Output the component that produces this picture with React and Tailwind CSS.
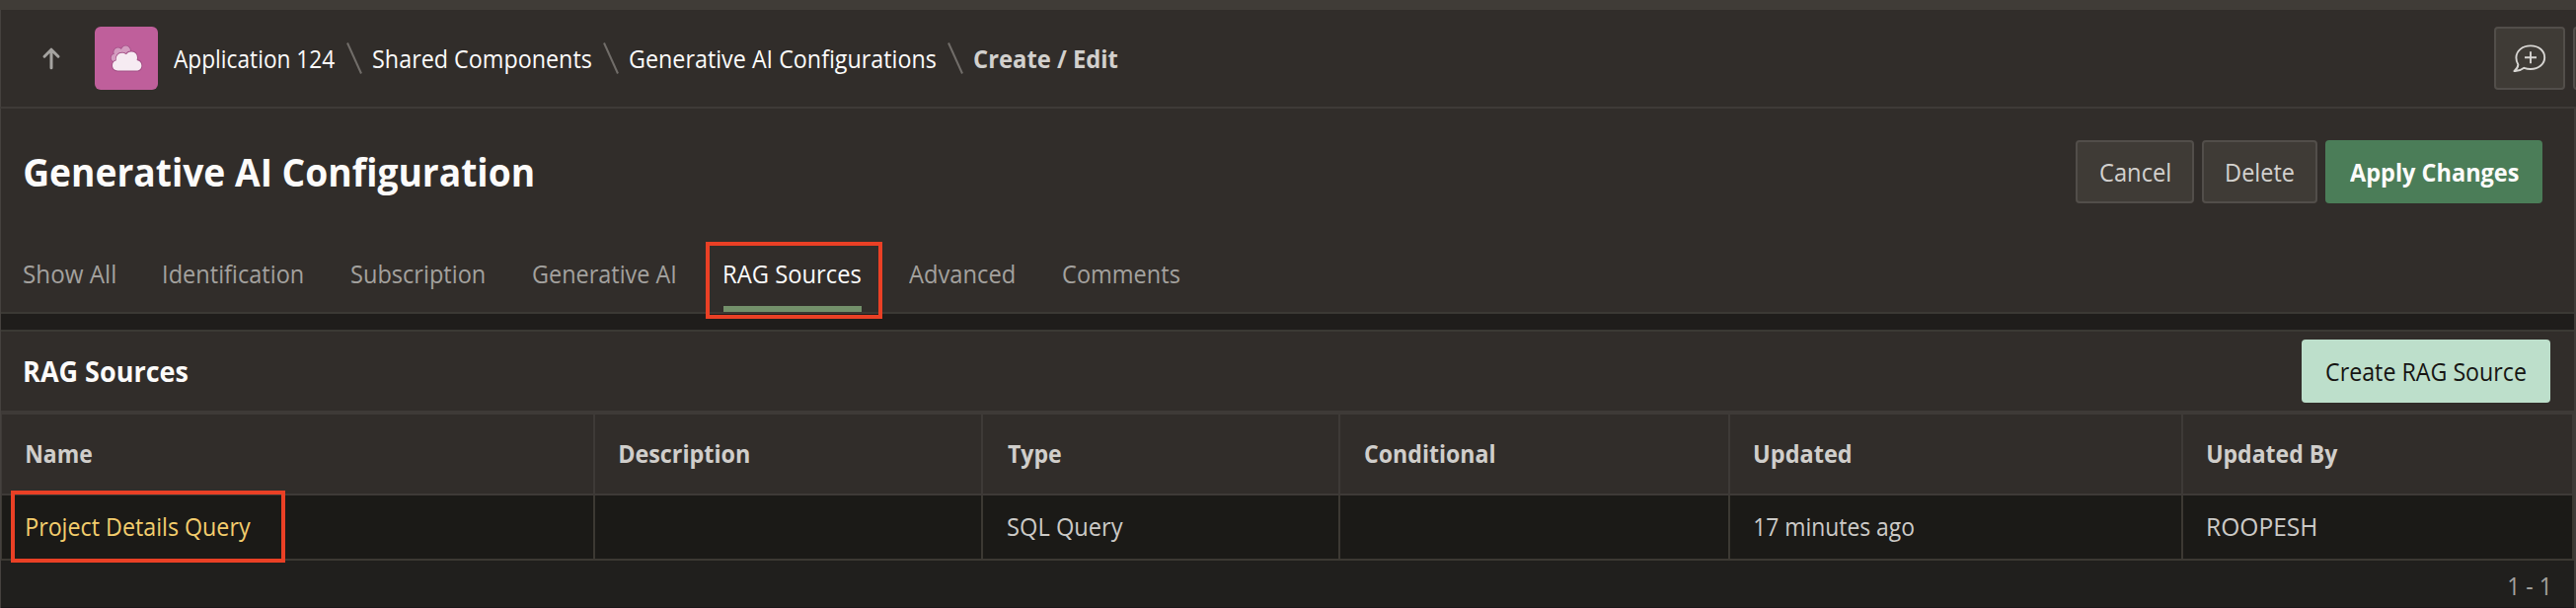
import { useLayoutEffect, useRef, useState } from "react";

/* Text set to an exact visible width: the glyphs are condensed horizontally to fit. */
function Fit({ w, className = "", children }) {
  const ref = useRef(null);
  const [fit, setFit] = useState({ scale: 1, shift: 0 });
  useLayoutEffect(() => {
    const cs = getComputedStyle(ref.current);
    const ctx = document.createElement("canvas").getContext("2d");
    ctx.font = `${cs.fontWeight} ${cs.fontSize} ${cs.fontFamily}`;
    const m = ctx.measureText(children);
    const scale = w / (m.actualBoundingBoxLeft + m.actualBoundingBoxRight);
    setFit({ scale, shift: m.actualBoundingBoxLeft * scale });
  }, [w, children]);
  return (
    <span className={`flex shrink-0 ${className}`} style={{ width: w }}>
      <span
        ref={ref}
        className="origin-left whitespace-nowrap"
        style={{ transform: `translateX(${fit.shift}px) scaleX(${fit.scale})` }}
      >
        {children}
      </span>
    </span>
  );
}

function CloudIcon() {
  const back = (
    <>
      <circle cx="20.6" cy="31.6" r="3.9" />
      <circle cx="23.6" cy="25.8" r="4.3" />
      <circle cx="31.4" cy="24.2" r="4.6" />
      <rect x="22" y="24" width="13" height="10" />
    </>
  );
  const front = (
    <path d="M23.300 44.500C20 44.500 18 42.300 18 39.300C18 36.700 19.300 35 21.800 34.300C21.300 30.500 23.200 27 27.200 26.700C29.200 26.500 30.800 27.200 32 28.200C32.800 26.300 35 25.200 37.600 25.400C41 25.700 42.900 28 43 31.200C43 32.300 42.800 33.200 42.600 34C45.500 34.500 47.400 36.500 47.400 39.400C47.400 42.500 45.200 44.500 42 44.500Z" />
  );
  return (
    <svg viewBox="0 0 64 64" className="size-16">
      <g fill="#a24e85" stroke="#a24e85" strokeWidth="1.6">{back}</g>
      <g fill="#d49cc0">{back}</g>
      <g fill="#a24e85" stroke="#a24e85" strokeWidth="1.8">{front}</g>
      <g fill="#f6ebf2">{front}</g>
    </svg>
  );
}

function Separator() {
  return (
    <svg viewBox="0 0 16 34" className="h-[34px] w-4 shrink-0" fill="none" stroke="#716d69" strokeWidth="2">
      <path d="M1 1.5 15 32.5" />
    </svg>
  );
}

const plainButton =
  "flex h-16 items-center justify-center rounded border-2 border-[#524e4a] bg-[#3f3b36] text-[#d3d1ce]";

const tabs = [
  { label: "Show All", w: 93 },
  { label: "Identification", w: 141 },
  { label: "Subscription", w: 135 },
  { label: "Generative AI", w: 144 },
  { label: "RAG Sources", w: 138, active: true },
  { label: "Advanced", w: 107 },
  { label: "Comments", w: 118 },
];

const columns = [
  { title: "Name", w: 66, value: "Project Details Query", vw: 227, link: true },
  { title: "Description", w: 131 },
  { title: "Type", w: 54, value: "SQL Query", vw: 117 },
  { title: "Conditional", w: 131 },
  { title: "Updated", w: 97, value: "17 minutes ago", vw: 161 },
  { title: "Updated By", w: 132, value: "ROOPESH", vw: 109 },
];

export default function App() {
  return (
    <div className="flex h-[616px] w-[2610px] flex-col overflow-hidden bg-[#312d2a] font-['Open_Sans','Noto_Sans',sans-serif] text-[25px] leading-8 font-[450] text-[#fcfbfa]">
      <div className="h-2.5 shrink-0 bg-[#403c37]" />

      <header className="flex h-[100px] shrink-0 items-center overflow-hidden border-b-2 border-l border-b-[#3e3a37] border-l-[#45413e]">
        <svg viewBox="0 0 20 24" className="ml-[41px] h-6 w-5 shrink-0" fill="none" stroke="#a5a3a0" strokeWidth="3" strokeLinecap="round" strokeLinejoin="round">
          <path d="M10 21.8V4M3 10.2 10 3.2l7 7" />
        </svg>
        <div className="ml-[34px] flex size-16 shrink-0 items-center justify-center rounded-md bg-[#bf5f9b]">
          <CloudIcon />
        </div>
        <nav className="ml-4 flex items-center font-medium">
          <Fit w={163}>Application 124</Fit>
          <span className="ml-3 flex"><Separator /></span>
          <Fit w={221} className="ml-[11px]">Shared Components</Fit>
          <span className="ml-3 flex"><Separator /></span>
          <Fit w={310} className="ml-[11px]">Generative AI Configurations</Fit>
          <span className="ml-3 flex"><Separator /></span>
          <Fit w={146} className="ml-[11px] font-bold text-[#d2d0cd]">Create / Edit</Fit>
        </nav>
        <div className="ml-auto -mr-16 flex gap-2">
          <div className={`${plainButton} w-[72px]`}>
            <svg viewBox="0 0 36 32" className="h-8 w-9 translate-x-px" fill="none" stroke="#d8d6d3" strokeWidth="1.9">
              <path d="M5.4 22.4C4 20.2 3.400 17.800 3.400 15.500 3.400 8.600 9.600 3.400 18 3.400S32.200 8.600 32.200 15.200 26.400 27 18 27c-2.300 0-4.500-.4-6.600-1.200C8.800 27.800 5.300 29.300 1.400 29 3.800 27.300 5.200 25 5.400 22.400Z" strokeLinejoin="round" />
              <path d="M18 9.200v12M12 15.200h12" />
            </svg>
          </div>
          <div className={`${plainButton} w-[67px]`} />
        </div>
      </header>

      <main className="flex grow flex-col border-r-2 border-l border-r-[#403c39] border-l-[#45413e]">
        <section className="flex h-52 shrink-0 flex-col border-b-2 border-[#3b3934]">
          <div className="flex h-32 items-center pr-8 pl-6">
            <h1 className="text-[40px] leading-[50px] font-bold">
              <Fit w={515}>Generative AI Configuration</Fit>
            </h1>
            <div className="ml-auto flex gap-2">
              <button className={`${plainButton} w-[120px]`}><Fit w={71}>Cancel</Fit></button>
              <button className={`${plainButton} w-[117px]`}><Fit w={68}>Delete</Fit></button>
              <button className="flex h-16 w-[220px] items-center justify-center rounded bg-[#4b7d58] font-bold text-[#fcfbfa]">
                <Fit w={171}>Apply Changes</Fit>
              </button>
            </div>
          </div>
          <div className="flex grow pl-[23px] text-[#a3a19e]">
            {tabs.map((t) =>
              t.active ? (
                <div key={t.label} className="relative mr-12 flex w-[140px] justify-center border-b-[6px] border-[#73906a] pt-[23px] text-[#fcfbfa]">
                  <Fit w={t.w} className="font-medium">{t.label}</Fit>
                  <div className="absolute top-[7px] -left-[18px] z-10 h-[78px] w-[179px] border-4 border-[#ea4025]" />
                </div>
              ) : (
                <div key={t.label} className="mr-[49px] flex pt-[23px]"><Fit w={t.w}>{t.label}</Fit></div>
              )
            )}
          </div>
        </section>

        <div className="h-4 shrink-0 bg-[#1f1d1b]" />

        <section className="flex grow flex-col border-t-2 border-[#3b3934]">
          <div className="flex h-20 shrink-0 items-center px-6">
            <h2 className="text-[28px] font-bold"><Fit w={165}>RAG Sources</Fit></h2>
            <button className="ml-auto flex h-16 w-[252px] items-center justify-center rounded bg-[#bddfcb] text-[#161513]">
              <Fit w={202}>Create RAG Source</Fit>
            </button>
          </div>
          <div className="relative grid shrink-0 grid-cols-[602px_393px_362px_395px_459px_396px] border-t-4 border-[#3e3a37]">
            {columns.map((c) => (
              <div key={c.title} className="flex h-[82px] items-center border-r-2 border-b-2 border-[#3e3a37] pb-0.5 pl-[25px] font-bold text-[#d0cecb] first:border-l">
                <Fit w={c.w}>{c.title}</Fit>
              </div>
            ))}
            {columns.map((c) => (
              <div
                key={c.title}
                className={`flex h-[66px] items-center border-r-2 border-b-2 border-[#3c3933] bg-[#1b1a17] pb-0.5 pl-[25px] ${c.link ? "border-l text-[#f3cd6d]" : "text-[#cccac7]"}`}
              >
                {c.value && <Fit w={c.vw}>{c.value}</Fit>}
              </div>
            ))}
            <div className="absolute top-[77px] left-[10px] h-[73px] w-[278px] border-4 border-[#ea4025]" />
          </div>
          <footer className="flex grow justify-end border-b border-[#1a1719] bg-[#201f1d] pt-[9px] pr-[27px] text-[#a3a19e]">
            <Fit w={39}>1 - 1</Fit>
          </footer>
        </section>
      </main>
    </div>
  );
}
